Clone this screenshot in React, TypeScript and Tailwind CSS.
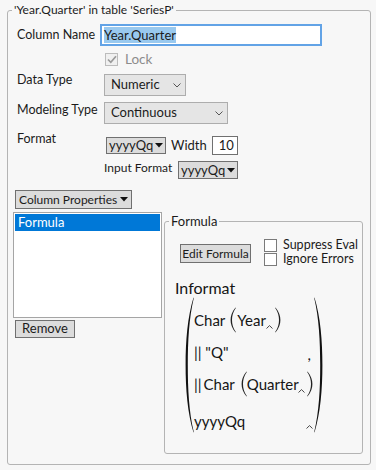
import React from "react";

const Chevron = () => (
    <svg className="shrink-0" width="8" height="5" viewBox="0 0 8 5">
        <polyline points="0.5,0.5 4,4 7.5,0.5" fill="none" stroke="#555" strokeWidth="1" />
    </svg>
);

const Tri = () => (
    <svg className="shrink-0" width="8" height="5" viewBox="0 0 8 5">
        <polygon points="0,0 8,0 4,4.5" fill="#111" />
    </svg>
);

const Caret = ({ className = "" }: { className?: string }) => (
    <svg className={"shrink-0 " + className} width="7" height="4" viewBox="0 0 7 4">
        <polyline points="0.5,3.5 3.5,0.6 6.5,3.5" fill="none" stroke="#333" strokeWidth="0.9" />
    </svg>
);

// big paren drawn as a filled crescent
const BigParen = ({ right = false }: { right?: boolean }) => (
    <svg width="9" height="136" viewBox="0 0 9 136" className={right ? "shrink-0 -scale-x-100" : "shrink-0"}>
        <path
            d="M8.5 0.5 C 2.5 20, 0.6 44, 0.6 68 C 0.6 92, 2.5 116, 8.5 135.5 L 8.8 135 C 4 115, 2.8 92, 2.8 68 C 2.8 44, 4 21, 8.8 1 Z"
            fill="#111"
        />
    </svg>
);

const SmallParen = ({ right = false }: { right?: boolean }) => (
    <svg width="6" height="26" viewBox="0 0 6 26" className={right ? "shrink-0 -scale-x-100" : "shrink-0"}>
        <path
            d="M5.5 0.5 C 1.8 5, 0.6 9, 0.6 13 C 0.6 17, 1.8 21, 5.5 25.5 L 5.8 25 C 3 21, 2 17, 2 13 C 2 9, 3 5, 5.8 1 Z"
            fill="#222"
        />
    </svg>
);

const Check = ({ checked = false, muted = false }: { checked?: boolean; muted?: boolean }) => (
    <div
        className={
            muted
                ? "shrink-0 w-[13px] h-[13px] border border-[#bcbcbc] bg-[#f0f0f0] flex items-center justify-center"
                : "shrink-0 w-[13px] h-[13px] border border-[#7a7a7a] bg-white flex items-center justify-center"
        }
    >
        {checked && (
            <svg width="10" height="9" viewBox="0 0 10 9">
                <polyline points="1,4.5 3.8,7.3 9,1.2" fill="none" stroke="#9a9a9a" strokeWidth="1.7" />
            </svg>
        )}
    </div>
);

export default function App() {
    return (
        <div className="w-[376px] h-[470px] bg-[#f7f7f7] pt-[2px] pl-[7px] overflow-hidden whitespace-nowrap font-['Lato',sans-serif] text-[12.5px] text-[#1b1b1b]">
            <fieldset className="w-[364px] h-[463px] border border-[#b4b4b4] rounded-[3px]">
                <legend className="ml-[4px] px-[2px] leading-[16px] text-[12px]">'Year.Quarter' in table 'SeriesP'</legend>
                <div className="pl-[9px]">
                    {/* column name */}
                    <div className="mt-[6px] flex items-center h-[22px]">
                        <div className="w-[83px]">Column Name</div>
                        <div className="w-[222px] h-[22px] border-2 border-[#62a3e6] bg-white pl-[2px] flex items-center text-[13px]">
                            <span className="bg-[#99c9ef] leading-[16px]">Year.Quarter</span>
                        </div>
                    </div>
                    <div className="mt-[7px] ml-[88px] flex items-center h-[13px]">
                        <Check checked muted />
                        <span className="ml-[7px] text-[13.5px] text-[#8c8c8c]">Lock</span>
                    </div>

                    {/* data type */}
                    <div className="mt-[8px] flex items-start">
                        <div className="w-[87px] -mt-[2px] leading-[16px]">Data Type</div>
                        <div className="w-[82px] h-[22px] bg-[#e5e5e5] border border-[#adadad] flex items-center justify-between pl-[6px] pr-[4px] text-[13px]">
                            <span>Numeric</span>
                            <Chevron />
                        </div>
                    </div>
                    <div className="mt-[6px] flex items-start">
                        <div className="w-[87px] leading-[16px]">Modeling Type</div>
                        <div className="w-[124px] h-[22px] bg-[#e5e5e5] border border-[#adadad] flex items-center justify-between pl-[6px] pr-[4px] text-[13px]">
                            <span>Continuous</span>
                            <Chevron />
                        </div>
                    </div>

                    {/* format */}
                    <div className="mt-[13px] flex items-start">
                        <div className="w-[89px] -mt-[6px] leading-[16px]">Format</div>
                        <div className="w-[60px] h-[17px] bg-[#dcdcdc] border border-[#707070] flex items-center justify-between pl-[2px] pr-[2px] text-[13px]">
                            <span className="leading-[15px]">yyyyQq</span>
                            <Tri />
                        </div>
                        <span className="ml-[5px] text-[13px] leading-[17px]">Width</span>
                        <div className="ml-[5px] -mt-[1px] w-[26px] h-[19px] border border-[#707070] bg-white text-right pr-[3px] text-[13px] leading-[17px]">
                            10
                        </div>
                    </div>
                    <div className="mt-[6px] ml-[87px] flex items-center">
                        <span className="w-[74px] text-[12px] -mt-[4px]">Input Format</span>
                        <div className="w-[60px] h-[18px] bg-[#dcdcdc] border border-[#707070] flex items-center justify-between pl-[2px] pr-[2px] text-[13px]">
                            <span className="leading-[15px]">yyyyQq</span>
                            <Tri />
                        </div>
                    </div>

                    {/* column properties */}
                    <div className="mt-[11px] -ml-[2px] w-[117px] h-[19px] bg-[#dcdcdc] border border-[#707070] flex items-center justify-between pl-[3px] pr-[3px] text-[12px]">
                        <span>Column Properties</span>
                        <Tri />
                    </div>

                    <div className="mt-[3px] -ml-[4px] flex items-start">
                        <div className="w-[149px]">
                            <div className="h-[106px] border border-[#a5a5a5] bg-white p-[1px]">
                                <div className="h-[17px] bg-[#0078d7] text-white pl-[3px] text-[13px] leading-[17px]">Formula</div>
                            </div>
                            <div className="mt-[2px] ml-[2px] w-[60px] h-[18px] bg-[#dcdcdc] border border-[#707070] flex items-center justify-center text-[13px]">
                                Remove
                            </div>
                        </div>

                        <fieldset className="ml-[2px] mt-[1px] w-[199px] h-[241px] border border-[#b4b4b4] rounded-[3px]">
                            <legend className="ml-[4px] px-[2px] leading-[16px] text-[13px]">Formula</legend>
                            <div className="mt-[9px] pl-[15px] flex items-start">
                                <div className="mt-[6px] w-[71px] h-[19px] bg-[#dcdcdc] border border-[#707070] flex items-center justify-center text-[12px]">
                                    Edit Formula
                                </div>
                                <div className="ml-[13px] flex flex-col">
                                    <div className="h-[14px] flex items-center">
                                        <Check />
                                        <span className="ml-[6px] text-[12.5px]">Suppress Eval</span>
                                    </div>
                                    <div className="h-[14px] flex items-center">
                                        <Check />
                                        <span className="ml-[6px] text-[12.5px]">Ignore Errors</span>
                                    </div>
                                </div>
                            </div>

                            <div className="mt-[12px] pl-[10px] text-[16px] leading-[20px] text-[#151515]">Informat</div>
                            <div className="-mt-[1px] ml-[20px] flex items-start text-[15px] text-[#151515]">
                                <BigParen />
                                <div className="w-[120px] pt-[7px]">
                                    <div className="h-[32px] flex items-center">
                                        <span>Char</span>
                                        <span className="ml-[5px] flex"><SmallParen /></span>
                                        <span className="ml-[1px]">Year</span>
                                        <Caret className="mt-[14px]" />
                                        <span className="ml-[2px] flex"><SmallParen right /></span>
                                    </div>
                                    <div className="h-[32px] flex items-center justify-between pr-[3px]">
                                        <span>||&nbsp;"Q"</span>
                                        <span className="mt-[4px]">,</span>
                                    </div>
                                    <div className="h-[32px] flex items-center">
                                        <span>||</span>
                                        <span className="ml-[2px]">Char</span>
                                        <span className="ml-[6px] flex"><SmallParen /></span>
                                        <span>Quarter</span>
                                        <Caret className="mt-[14px] -ml-[1px]" />
                                        <span className="ml-[2px] flex"><SmallParen right /></span>
                                    </div>
                                    <div className="mt-[5px] h-[32px] flex items-center justify-between pr-[1px]">
                                        <span>yyyyQq</span>
                                        <Caret className="mt-[12px]" />
                                    </div>
                                </div>
                                <BigParen right />
                            </div>
                        </fieldset>
                    </div>
                </div>
            </fieldset>
        </div>
    );
}
